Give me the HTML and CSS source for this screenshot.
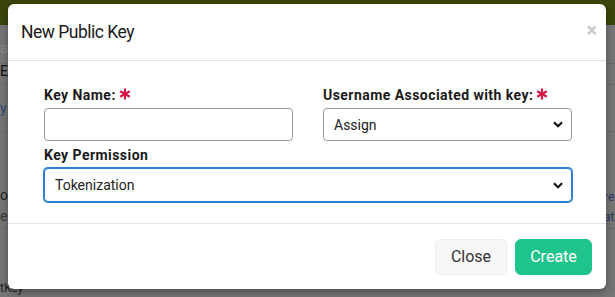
FILE: index.html
```html
<!DOCTYPE html>
<html>
<head>
<meta charset="utf-8">
<link rel="stylesheet" href="styles.css">
</head>
<body>
<div class="page">
  <div class="topbar"></div>
  <div class="bg-content">
    <div class="bg-row faint">an</div>
    <div class="bg-row dark">E</div>
    <div class="bg-row link">y</div>
    <div class="bg-row gap">ov</div>
    <div class="bg-row">e</div>
    <div class="bg-row last">tKey</div>
  </div>
  <div class="bg-right">
    <div class="bg-r1">re</div>
    <div class="bg-r2">at</div>
  </div>
</div>

<div class="modal">
  <div class="modal-header">
    <h4 class="modal-title">New Public Key</h4>
    <span class="close">&times;</span>
  </div>
  <div class="modal-body">
    <div class="field">
      <label class="label">Key Name:<svg class="req" viewBox="0 0 12 12" width="12" height="12"><g stroke="#d4194a" stroke-width="2.2" stroke-linecap="butt"><line x1="6" y1="0.5" x2="6" y2="11.5"/><line x1="1.2" y1="3.2" x2="10.8" y2="8.8"/><line x1="1.2" y1="8.8" x2="10.8" y2="3.2"/></g></svg></label>
      <input class="control" type="text">
    </div>
    <div class="field">
      <label class="label">Username Associated with key:<svg class="req" viewBox="0 0 12 12" width="12" height="12"><g stroke="#d4194a" stroke-width="2.2" stroke-linecap="butt"><line x1="6" y1="0.5" x2="6" y2="11.5"/><line x1="1.2" y1="3.2" x2="10.8" y2="8.8"/><line x1="1.2" y1="8.8" x2="10.8" y2="3.2"/></g></svg></label>
      <div class="control select">Assign</div>
    </div>
    <div class="field wide">
      <label class="label">Key Permission</label>
      <div class="control select focus">Tokenization</div>
    </div>
  </div>
  <div class="modal-footer">
    <button class="btn btn-close">Close</button>
    <button class="btn btn-create">Create</button>
  </div>
</div>
</body>
</html>
```
FILE: styles.css
```css
html, body {
  margin: 0;
  padding: 0;
}
body {
  width: 615px;
  height: 297px;
  overflow: hidden;
  background: #767676;
  font-family: Roboto, "Noto Sans", sans-serif;
  color: #222;
}
.page {
  height: 297px;
}
.topbar {
  height: 25px;
  background: #3a460b;
}
.bg-content {
  font-size: 14px;
  color: #3a3a3a;
}
.bg-row {
  height: 24px;
  line-height: 24px;
  border-bottom: 1px solid #6c6c6c;
}
.bg-row.faint { color: #8a8a8a; margin-top: 8px; height: 30px; line-height: 30px; }
.bg-row.dark { color: #111; height: 20px; line-height: 14px; }
.bg-row.link { color: #2a4a78; height: 46px; line-height: 46px; }
.bg-row.gap { margin-top: 54px; color: #222; border-bottom: none; height: 18px; line-height: 18px; }
.bg-row.last { margin-top: 52px; color: #222; border-bottom: none; font-size: 12px; height: 14px; line-height: 14px; }
.bg-right {
  position: absolute;
  left: 604px;
  top: 187px;
  font-size: 12px;
  color: #2a3a60;
}
.bg-r1, .bg-r2 { height: 20px; line-height: 20px; }

.modal {
  position: absolute;
  left: 8px;
  top: 4px;
  width: 598px;
  height: 285px;
  background: #fff;
  border-radius: 6px;
  box-shadow: 0 3px 9px rgba(0,0,0,.35);
  display: flex;
  flex-direction: column;
}
.modal-header {
  height: 56px;
  border-bottom: 1px solid #e3e3e3;
  display: flex;
  align-items: center;
  justify-content: space-between;
  padding: 0 9px 0 13px;
}
.modal-title {
  margin: 0;
  font-size: 17.5px;
  font-weight: 400;
  color: #1a1a1a;
  letter-spacing: -0.5px;
}
.close {
  font-size: 20px;
  font-weight: 700;
  color: #c9c9c9;
  line-height: 1;
  margin-top: -5px;
}
.modal-body {
  display: grid;
  grid-template-columns: 1fr 1fr;
  column-gap: 30px;
  row-gap: 4px;
  padding: 24px 34px 21px 36px;
  border-bottom: 1px solid #e3e3e3;
}
.field {
  display: flex;
  flex-direction: column;
}
.field.wide {
  grid-column: 1 / span 2;
}
.label {
  font-size: 14px;
  font-weight: 700;
  letter-spacing: 0.45px;
  color: #1a1a1a;
  height: 20px;
  line-height: 20px;
  margin-bottom: 3px;
  display: flex;
  align-items: center;
}
.req {
  margin-left: 3px;
  margin-top: -2px;
}
.control {
  box-sizing: border-box;
  height: 33px;
  border: 1px solid #9a9a9a;
  border-radius: 4px;
  font-family: inherit;
  font-size: 14px;
  padding: 0 10px;
  background: #fff;
  width: 100%;
}
.select {
  display: flex;
  align-items: center;
  color: #222;
  background-image: url("data:image/svg+xml;utf8,<svg xmlns='http://www.w3.org/2000/svg' width='10' height='7' viewBox='0 0 10 7'><path d='M1 1.3 L5 5.3 L9 1.3' fill='none' stroke='%23111' stroke-width='2.2'/></svg>");
  background-repeat: no-repeat;
  background-position: right 8px center;
}
.select.focus {
  height: 34px;
  border: 1px solid #2b7fd6;
  box-shadow: 0 0 0 1px #2b7fd6;
}
.modal-footer {
  flex: 1;
  display: flex;
  justify-content: flex-end;
  align-items: center;
  gap: 8px;
  padding: 0 14px 0 0;
}
.btn {
  font-family: inherit;
  font-size: 16px;
  height: 36px;
  border-radius: 6px;
  padding: 0 12px;
  cursor: pointer;
}
.btn-close {
  background: #f8f8f8;
  border: 1px solid #ececec;
  color: #333;
  width: 72px;
}
.btn-create {
  background: #1fc38c;
  border: 1px solid #1fc38c;
  color: #fff;
  width: 77px;
}
```
